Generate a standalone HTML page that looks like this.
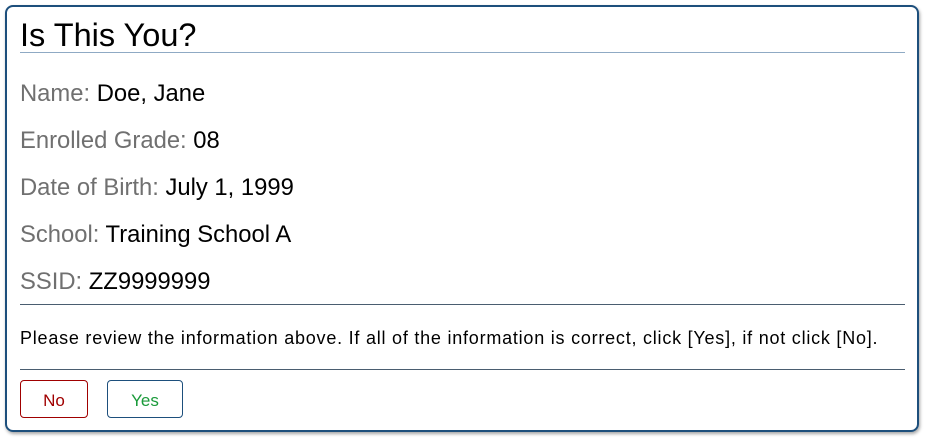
<!DOCTYPE html>
<html><head><style>
body{margin:0;width:925px;height:438px;background:#fff;font-family:"Liberation Sans",Arial,sans-serif;position:relative;overflow:hidden}
.box{position:absolute;left:5px;top:5px;width:910px;height:423px;border:2px solid #1d4f7c;border-radius:8px;box-shadow:1px 2px 3px rgba(0,0,0,.35)}
.a{position:absolute;white-space:nowrap}
h1{position:absolute;left:20px;top:17px;margin:0;font-weight:normal;font-size:32.5px;color:#000}
.l1{position:absolute;left:20px;top:52px;width:885px;height:1px;background:#8faac4}
.hr{position:absolute;left:20px;width:885px;height:1px;background:#4a5d70}
.row{left:20px;font-size:23.8px;color:#000}
.row span{color:#707070}
.p{left:20px;top:328px;font-size:18px;letter-spacing:0.77px;color:#000}
.btn{position:absolute;top:380px;height:38px;border:1px solid;border-radius:4px;font-size:17px;text-align:center;line-height:40px;box-sizing:border-box}
</style></head><body>
<div class="box"></div>
<h1>Is This You?</h1>
<div class="l1"></div>
<div class="a row" style="top:80px"><span>Name:</span> Doe, Jane</div>
<div class="a row" style="top:127px"><span>Enrolled Grade:</span> 08</div>
<div class="a row" style="top:174px"><span>Date of Birth:</span> July 1, 1999</div>
<div class="a row" style="top:221px"><span>School:</span> Training School A</div>
<div class="a row" style="top:268px"><span>SSID:</span> ZZ9999999</div>
<div class="hr" style="top:304px"></div>
<div class="a p">Please review the information above. If all of the information is correct, click [Yes], if not click [No].</div>
<div class="hr" style="top:369px"></div>
<div class="btn" style="left:20px;width:68px;border-color:#a00000;color:#a00000">No</div>
<div class="btn" style="left:107px;width:76px;border-color:#1d4f7c;color:#1a9a3a">Yes</div>
</body></html>
